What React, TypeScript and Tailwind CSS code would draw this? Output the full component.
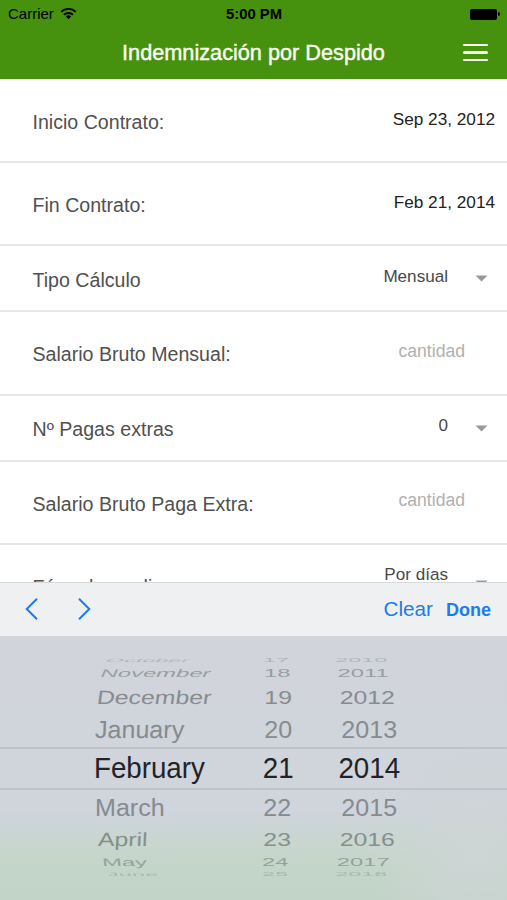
import { useState } from "react";

interface Field {
  label: string;
  value: string;
  kind: "date" | "select" | "amount";
  height: string;
  tall?: boolean;
}

const fields: Field[] = [
  { label: "Inicio Contrato:", value: "Sep 23, 2012", kind: "date", height: "h-[84px] pt-px" },
  { label: "Fin Contrato:", value: "Feb 21, 2014", kind: "date", height: "h-[83px]" },
  { label: "Tipo Cálculo", value: "Mensual", kind: "select", height: "h-[66px] pt-px" },
  { label: "Salario Bruto Mensual:", value: "cantidad", kind: "amount", height: "h-[84px]" },
  { label: "Nº Pagas extras", value: "0", kind: "select", height: "h-[66px]" },
  { label: "Salario Bruto Paga Extra:", value: "cantidad", kind: "amount", height: "h-[83px]" },
  { label: "Fórmula media", value: "Por días", kind: "select", height: "h-[83px]", tall: true },
];

const months = ["October", "November", "December", "January", "February", "March", "April", "May", "June"];
const days = ["17", "18", "19", "20", "21", "22", "23", "24", "25"];
const years = ["2010", "2011", "2012", "2013", "2014", "2015", "2016", "2017", "2018"];

// One entry per wheel row, from top to bottom
const wheelRows = [
  { row: "h-[7px] text-[#858b90]/45", text: "scale-x-[.81] scale-y-[.16]" },
  { row: "h-[18px] text-[#858b90]/75", text: "scale-x-[.82] scale-y-[.38]" },
  { row: "h-[30px] text-[#868c90]", text: "scale-x-[.855] scale-y-[.66]" },
  { row: "h-[35px] text-[#868b8f]", text: "scale-x-[.865] scale-y-[.85]" },
  { row: "h-[43px] border-y-2 border-[#bfc3c9] text-[#202327]", text: "scale-x-[.955]" },
  { row: "h-[34px] text-[#868b8f]", text: "scale-x-[.865] scale-y-[.85]" },
  { row: "h-[30px] text-[#84908c]", text: "scale-x-[.855] scale-y-[.66]" },
  { row: "h-[16px] text-[#84908c]/75", text: "scale-x-[.82] scale-y-[.38]" },
  { row: "h-[8px] text-[#84908c]/45", text: "scale-x-[.81] scale-y-[.16]" },
];

const monthIndent = [
  "pl-[106px]",
  "pl-[101px]",
  "pl-[97px]",
  "pl-[95px]",
  "pl-[94px]",
  "pl-[95px]",
  "pl-[98px]",
  "pl-[102px]",
  "pl-[107px]",
];

const monthSkew = [
  "-skew-x-12",
  "-skew-x-12",
  "-skew-x-6",
  "-skew-x-2",
  "skew-x-0",
  "skew-x-0",
  "-skew-x-2",
  "skew-x-3",
  "skew-x-6",
];

// The year column curves towards the centre at both ends of the wheel
const yearShift = [
  "pr-[16px]",
  "pr-[11px]",
  "pr-[4px]",
  "pr-0",
  "pr-0",
  "pr-0",
  "pr-[4px]",
  "pr-[11px]",
  "pr-[16px]",
];

const dayShift = ["pr-[4px]", "pr-[2px]", "pr-0", "pr-0", "pr-0", "pr-[2px]", "pr-[2px]", "pr-[5px]", "pr-[6px]"];

function StatusBar() {
  return (
    <div className="flex h-7 items-center justify-between pr-[7px] pl-2 text-black">
      <div className="flex w-[200px] items-center gap-[6px]">
        <span className="text-[15px] leading-7">Carrier</span>
        <svg width="17" height="13" viewBox="0 0 17 13" className="mb-[2px]">
          <g fill="none" stroke="currentColor" strokeWidth="1.9">
            <path d="M1.3 4.9a10.2 10.2 0 0 1 14.4 0" />
            <path d="M4 7.8a6.4 6.4 0 0 1 9 0" />
          </g>
          <path d="M8.5 12.2 5.9 9.6a3.7 3.7 0 0 1 5.2 0z" fill="currentColor" />
        </svg>
      </div>
      <span className="text-[14.8px] leading-7 font-bold">5:00 PM</span>
      <div className="flex w-[200px] items-center justify-end gap-px">
        <div className="h-[11px] w-[27px] rounded-[2px] bg-black" />
        <div className="h-1 w-[2px] rounded-r-full bg-black" />
      </div>
    </div>
  );
}

function Header() {
  return (
    <header className="h-[79px] bg-[#46920e]">
      <StatusBar />
      <div className="flex h-[49px] items-center justify-between pr-[19px] text-[#fbfff5]">
        <div className="w-[26px]" />
        <h1 className="pl-[18px] text-[21.7px] leading-[49px] [-webkit-text-stroke:0.4px_currentColor]">
          Indemnización por Despido
        </h1>
        <button className="flex w-[25px] flex-col gap-[5px]" aria-label="menu">
          <span className="h-[2.5px] w-full rounded-full bg-[#f4fde8]" />
          <span className="h-[2.5px] w-full rounded-full bg-[#f4fde8]" />
          <span className="h-[2.5px] w-full rounded-full bg-[#f4fde8]" />
        </button>
      </div>
    </header>
  );
}

function FieldRow({ field }: { field: Field }) {
  return (
    <div
      className={`flex shrink-0 items-center justify-between border-b-2 border-[#e7e7e7] pl-[32.5px] ${field.height}`}
    >
      <label className="pt-[2px] text-[19.6px] leading-6 text-[#505050]">{field.label}</label>
      {field.kind === "date" && (
        <span className="pr-3 pb-[3px] text-[17.2px] leading-6 text-[#222]">{field.value}</span>
      )}
      {field.kind === "amount" && (
        <span className="pr-[42px] pb-[5px] text-[17.6px] leading-6 text-[#b0b0b0]">
          {field.value}
        </span>
      )}
      {field.kind === "select" && (
        <div className="flex items-center gap-[27px] pr-[19px]">
          <span
            className={`text-[17.1px] leading-6 text-[#484848] ${field.tall ? "pb-[21px]" : "pb-[4px]"}`}
          >
            {field.value}
          </span>
          <svg width="13" height="7" viewBox="0 0 13 7" className={field.tall ? "mb-[4px]" : ""}>
            <path d="M.5.5h12l-6 6z" fill="#999" />
          </svg>
        </div>
      )}
    </div>
  );
}

function KeyboardBar() {
  return (
    <div className="flex h-[55px] shrink-0 items-center justify-between border-y border-t-[#d8dadb] border-b-[#d3d7db] bg-[#eef0f2] pr-4 pl-[25px] text-[#1d7bee]">
      <div className="flex gap-[40px] pb-[2px]">
        <svg width="13" height="22" viewBox="0 0 13 22" fill="none" stroke="currentColor" strokeWidth="2">
          <path d="M12 .7 1.7 11 12 21.3" />
        </svg>
        <svg width="13" height="22" viewBox="0 0 13 22" fill="none" stroke="currentColor" strokeWidth="2">
          <path d="M1 .7 11.3 11 1 21.3" />
        </svg>
      </div>
      <div className="flex items-baseline gap-[13px]">
        <button className="text-[20.7px] leading-7">Clear</button>
        <button className="text-[18px] leading-7 font-bold">Done</button>
      </div>
    </div>
  );
}

function DateWheel() {
  return (
    <div className="flex-1 bg-[radial-gradient(circle_at_94%_82%,#ced5d6_0%,#ced5d600_22%),linear-gradient(to_bottom,#d1d5da_0%,#d0d4dc_66%,#c8d6cf_78%,#c3d5c8_88%,#c2d3c8_100%)] pt-5">
      {wheelRows.map((r, i) => (
        <div key={months[i]} className={`flex items-center text-[29px] leading-none whitespace-nowrap ${r.row}`}>
          <div className={`w-[248px] ${monthIndent[i]}`}>
            <span className={`inline-block origin-left ${r.text} ${monthSkew[i]}`}>{months[i]}</span>
          </div>
          <div className={`flex w-[60px] justify-center ${dayShift[i]}`}>
            <span className={`inline-block ${r.text}`}>{days[i]}</span>
          </div>
          <div className={`flex w-[122px] justify-center ${yearShift[i]}`}>
            <span className={`inline-block ${r.text}`}>{years[i]}</span>
          </div>
        </div>
      ))}
    </div>
  );
}

export default function App() {
  const [items] = useState<Field[]>(fields);

  return (
    <div className="flex h-[900px] w-[507px] flex-col overflow-hidden bg-white font-['Liberation_Sans',Arial,sans-serif]">
      <Header />
      <main className="flex h-[503px] shrink-0 flex-col overflow-hidden">
        {items.map((field) => (
          <FieldRow key={field.label} field={field} />
        ))}
      </main>
      <KeyboardBar />
      <DateWheel />
    </div>
  );
}
